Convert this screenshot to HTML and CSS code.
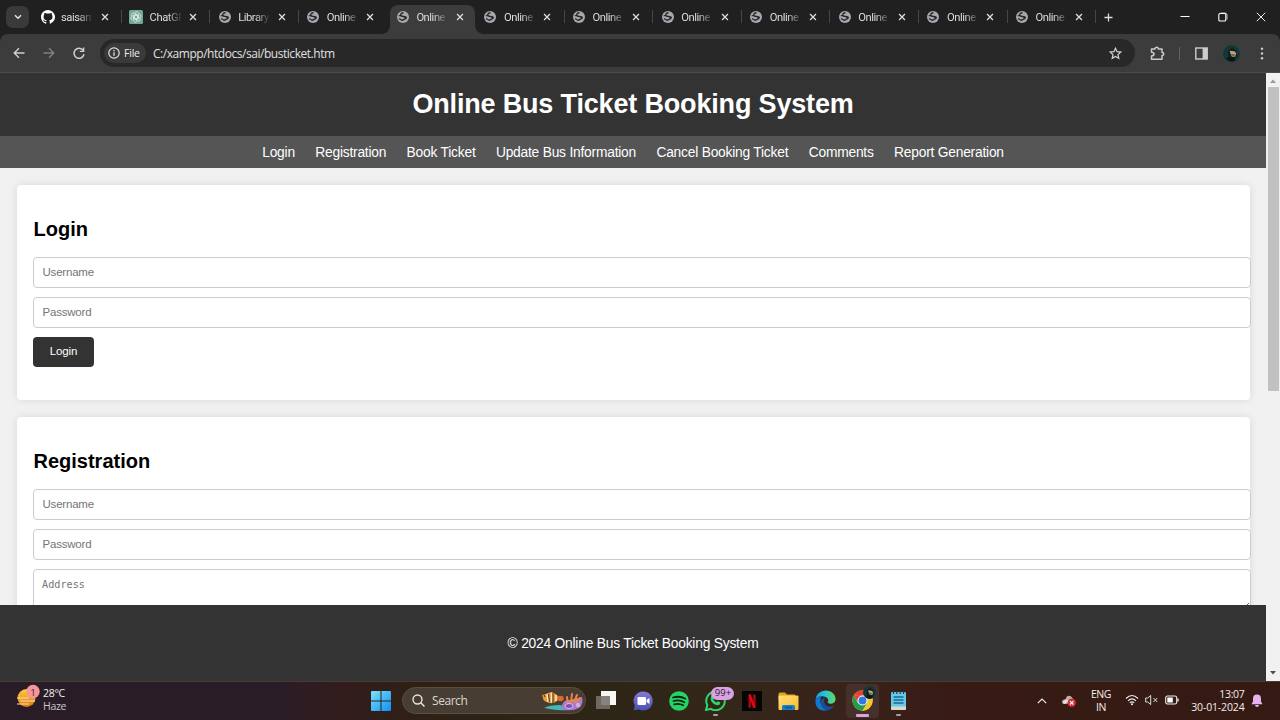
FILE: index.html
```html
<!DOCTYPE html>
<html lang="en">
<head>
<meta charset="utf-8">
<title>Online Bus Ticket Booking System</title>
<link rel="stylesheet" href="styles.css">
</head>
<body>
<svg class="defs" aria-hidden="true">
  <defs>
    <symbol id="globe" viewBox="0 0 24 24"><circle cx="12" cy="12" r="12" fill="#a5a9ae"/><path d="M13 3.500Q7 4 7.500 8q1 3 5.500 3 5 0 5 2.500t-4 3q-3 3-5 1.500l-5-3" fill="none" stroke="#24282b" stroke-width="2.600"/><path d="M2 10l5-3 2 4zM15 11l5 1-1 3-4-1z" fill="#24282b"/></symbol>
    <symbol id="x" viewBox="0 0 10 10"><path d="M1.3 1.3l7.4 7.4M8.7 1.3L1.3 8.7" stroke="#dedede" stroke-width="1.6" fill="none"/></symbol>
    <linearGradient id="win" x2="1" y2="1"><stop stop-color="#7fe0fb"/><stop offset="1" stop-color="#0a92f2"/></linearGradient>
    <linearGradient id="sun" x2="0" y2="1"><stop stop-color="#ffce3d"/><stop offset="1" stop-color="#dc7419"/></linearGradient>
    <linearGradient id="edge" x2="1" y2="0"><stop stop-color="#1aa0e0"/><stop offset=".5" stop-color="#2bc3d5"/><stop offset="1" stop-color="#62d957"/></linearGradient>
    <linearGradient id="chat" x2="0" y2="1"><stop stop-color="#8379d6"/><stop offset="1" stop-color="#4c50b5"/></linearGradient>
    <linearGradient id="fold" x2="1" y2="1"><stop stop-color="#ffdf7c"/><stop offset="1" stop-color="#f9bb2b"/></linearGradient>
    <symbol id="avatar" viewBox="0 0 18 18"><circle cx="9" cy="9" r="9" fill="#12383a"/><path d="M5 6l5-4 4 4 1 6-4 4-5-3z" fill="#141d1d"/><path d="M7 6l5 .5 2 2-1 4-3.500 0-1.500-3z" fill="#bba17f"/><path d="M8 9.500l5 .5-2 2.500z" fill="#6d5743"/><path d="M3 14q5-3 11 2-6 4-11-2z" fill="#081717"/></symbol>
  </defs>
</svg>

<header class="tabstrip">
  <button class="tabsearch" aria-label="Search tabs"><svg width="8" height="6" viewBox="0 0 8 6"><path d="M1 1.200l3 3 3-3" stroke="#e4e4e4" stroke-width="1.500" fill="none"/></svg></button>
  <div class="tabs">
    <div class="tab"><svg class="fav big" viewBox="0 0 16 16"><path fill="#fff" d="M8 0C3.580 0 0 3.580 0 8c0 3.540 2.290 6.530 5.470 7.590.4.070.550-.170.550-.380 0-.190-.010-.820-.010-1.490-2.010.370-2.530-.490-2.690-.940-.090-.230-.480-.940-.820-1.130-.280-.150-.680-.520-.010-.530.630-.010 1.080.580 1.230.820.720 1.210 1.870.870 2.330.660.070-.520.280-.870.510-1.070-1.780-.2-3.640-.890-3.640-3.950 0-.870.310-1.590.820-2.150-.080-.2-.360-1.020.080-2.120 0 0 .670-.210 2.200.820a7.700 7.700 0 0 1 4 0c1.530-1.040 2.200-.820 2.200-.820.440 1.100.160 1.920.080 2.120.510.560.820 1.270.820 2.150 0 3.070-1.870 3.750-3.650 3.950.290.250.540.730.540 1.480 0 1.070-.010 1.930-.010 2.200 0 .210.150.460.550.380A8 8 0 0 0 8 0z"/></svg><span class="name">saisant</span><svg class="close"><use href="#x"/></svg></div>
    <div class="tab"><svg class="fav big" viewBox="0 0 14 14"><rect width="14" height="14" rx="1.500" fill="#72a895"/><g fill="none" stroke="#e8f5ef" stroke-width=".8"><path id="petal" d="M6 2.500c2-1.500 4 .2 3.500 2v3L7 9"/><use href="#petal" transform="rotate(60 7 7)"/><use href="#petal" transform="rotate(120 7 7)"/><use href="#petal" transform="rotate(180 7 7)"/><use href="#petal" transform="rotate(240 7 7)"/><use href="#petal" transform="rotate(300 7 7)"/></g></svg><span class="name">ChatGP</span><svg class="close"><use href="#x"/></svg></div>
    <div class="tab"><svg class="fav"><use href="#globe"/></svg><span class="name">Library</span><svg class="close"><use href="#x"/></svg></div>
    <div class="tab nosep"><svg class="fav"><use href="#globe"/></svg><span class="name">Online</span><svg class="close"><use href="#x"/></svg></div>
    <div class="tab active nosep"><svg class="fav"><use href="#globe"/></svg><span class="name">Online</span><svg class="close"><use href="#x"/></svg></div>
    <div class="tab"><svg class="fav"><use href="#globe"/></svg><span class="name">Online</span><svg class="close"><use href="#x"/></svg></div>
    <div class="tab"><svg class="fav"><use href="#globe"/></svg><span class="name">Online</span><svg class="close"><use href="#x"/></svg></div>
    <div class="tab"><svg class="fav"><use href="#globe"/></svg><span class="name">Online</span><svg class="close"><use href="#x"/></svg></div>
    <div class="tab"><svg class="fav"><use href="#globe"/></svg><span class="name">Online</span><svg class="close"><use href="#x"/></svg></div>
    <div class="tab"><svg class="fav"><use href="#globe"/></svg><span class="name">Online</span><svg class="close"><use href="#x"/></svg></div>
    <div class="tab"><svg class="fav"><use href="#globe"/></svg><span class="name">Online</span><svg class="close"><use href="#x"/></svg></div>
    <div class="tab"><svg class="fav"><use href="#globe"/></svg><span class="name">Online</span><svg class="close"><use href="#x"/></svg></div>
  </div>
  <svg class="newtab" viewBox="0 0 10 10"><path d="M5 .5v9M.5 5h9" stroke="#ddd" stroke-width="1.400"/></svg>
  <div class="wincontrols">
    <svg width="10" height="10" viewBox="0 0 10 10"><path d="M.5 4.500h9" stroke="#fff"/></svg>
    <svg width="10" height="10" viewBox="0 0 10 10"><path d="M2.500 1H7q2 0 2 2v4.500" stroke="#bbb" fill="none"/><rect x=".8" y="1.500" width="7" height="7.500" rx="1.300" stroke="#fff" stroke-width="1.100" fill="none"/></svg>
    <svg width="10" height="10" viewBox="0 0 10 10"><path d="M.8.8l8.400 8.400M9.200.8L.8 9.200" stroke="#eee" stroke-width="1"/></svg>
  </div>
</header>

<div class="toolbar">
  <div class="navicons">
    <svg width="12" height="12" viewBox="0 0 12 12"><path d="M11.500 6H1.500M6 1.200L1.200 6 6 10.800" stroke="#d0d0d0" stroke-width="1.400" fill="none"/></svg>
    <svg width="12" height="12" viewBox="0 0 12 12"><path d="M.5 6h10M6 1.200L10.800 6 6 10.800" stroke="#808080" stroke-width="1.400" fill="none"/></svg>
    <svg width="12" height="12" viewBox="0 0 12 12"><path d="M10.200 3.500A5 5 0 1 0 11 7.200" stroke="#d0d0d0" stroke-width="1.500" fill="none"/><path d="M11.300.5v4.500H6.800V3.700h3.100V.5z" fill="#d0d0d0"/></svg>
  </div>
  <div class="omnibox">
    <span class="chip"><svg width="12" height="12" viewBox="0 0 12 12"><circle cx="6" cy="6" r="5.200" stroke="#e4e4e4" stroke-width="1.200" fill="none"/><path d="M6 5.200v3.600M6 2.900v1.300" stroke="#e4e4e4" stroke-width="1.300"/></svg><span>File</span></span>
    <span class="url">C:/xampp/htdocs/sai/busticket.htm</span>
    <svg class="star" width="13" height="13" viewBox="0 0 13 13"><path d="M6.500 1.200l1.550 3.450 3.750.4-2.800 2.550.8 3.700-3.300-1.900-3.300 1.900.8-3.700L1.200 5.050l3.750-.4z" stroke="#d4d4d4" stroke-width="1.200" fill="none"/></svg>
  </div>
  <div class="actions">
    <svg width="15" height="15" viewBox="0 0 15 15"><path d="M1.500 3H5q0-1.800 1.700-1.800T8.400 3H12v3.400q1.800 0 1.800 1.600T12 9.600v3.600H1.500V10Q4 10 4 8.100T1.500 6.200z" stroke="#cacaca" stroke-width="1.500" fill="none" stroke-linejoin="round"/></svg>
    <i class="divider"></i>
    <svg width="13" height="13" viewBox="0 0 13 13"><rect x=".8" y="1" width="11.400" height="11" stroke="#cecece" stroke-width="1.400" fill="none"/><path d="M7.600 1h4.600v11H7.600z" fill="#cecece"/></svg>
    <svg width="17" height="17"><use href="#avatar"/></svg>
    <svg width="4" height="13" viewBox="0 0 4 13"><g fill="#cfcfcf"><circle cx="2" cy="1.700" r="1.200"/><circle cx="2" cy="6.500" r="1.200"/><circle cx="2" cy="11.300" r="1.200"/></g></svg>
  </div>
</div>

<div class="viewport">
  <div class="page">
    <div class="masthead"><h1>Online Bus Ticket Booking System</h1></div>
    <nav class="menu"><a>Login</a><a>Registration</a><a>Book Ticket</a><a>Update Bus Information</a><a>Cancel Booking Ticket</a><a>Comments</a><a>Report Generation</a></nav>
    <main class="content">
      <section class="card">
        <h2>Login</h2>
        <input class="field" type="text" placeholder="Username">
        <input class="field" type="password" placeholder="Password">
        <button class="submit">Login</button>
      </section>
      <section class="card">
        <h2>Registration</h2>
        <input class="field" type="text" placeholder="Username">
        <input class="field" type="password" placeholder="Password">
        <textarea class="field area" placeholder="Address"></textarea>
      </section>
    </main>
    <footer class="footer">© 2024 Online Bus Ticket Booking System</footer>
  </div>
  <div class="scrollbar">
    <svg width="6" height="4" viewBox="0 0 6 4"><path d="M0 4l3-3.500L6 4z" fill="#9a9a9a"/></svg>
    <div class="thumb"></div>
    <svg class="down" width="6" height="4" viewBox="0 0 6 4"><path d="M0 0h6L3 3.500z" fill="#4d4d4d"/></svg>
  </div>
</div>

<div class="taskbar">
  <div class="weather">
    <svg width="26" height="26" viewBox="0 0 26 26"><circle cx="10.500" cy="14" r="9" fill="url(#sun)"/><path d="M1 14h12M4 17h15M1 20h12" stroke="#ffe0a0" stroke-width="1.200"/><circle cx="17" cy="7.500" r="6.700" fill="#f7959d"/></svg>
    <span class="alert">1</span>
    <div class="wtext"><span>28°C</span><span class="dim">Haze</span></div>
  </div>
  <div class="apps">
    <svg class="start" width="20" height="20" viewBox="0 0 20 20"><path d="M0 1q0-1 1-1h8.500v9.500H0zM10.500 0H19q1 0 1 1v8.500h-9.500zM0 10.500h9.500V20H1q-1 0-1-1zM10.500 10.500H20V19q0 1-1 1h-8.500z" fill="url(#win)"/></svg>
    <div class="search">
      <svg width="13" height="13" viewBox="0 0 13 13"><circle cx="5.500" cy="5.500" r="4.500" stroke="#e8e4de" stroke-width="1.400" fill="none"/><path d="M8.800 8.800l3.700 3.700" stroke="#e8e4de" stroke-width="1.500"/></svg>
      <span>Search</span>
      <svg class="reef" width="42" height="21" viewBox="0 0 42 21"><path d="M3 18q5-3 16-3l16 4q-12 3-32-1z" fill="#42b9b5"/><path d="M2 8L1 5l4-1q6-4 11 1l2 3-2 3q-5 4-10 1-4-1-4-4z" fill="#ec982d"/><path d="M6 4l1 8M10.500 2.500v10M15 5v6" stroke="#f4e6ca" stroke-width="1.600"/><path d="M7.500 4l1 8M12 3v10M3 5l1 2" stroke="#3b2919" stroke-width=".9"/><ellipse cx="19.500" cy="8.500" rx="3.200" ry="2.800" fill="#d96f25"/><path d="M21 19q-1-7 5-9l8 0 7-3q2 7-3 11-8 4-17 1z" fill="#a979cc"/><path d="M27 13l-1-6M30 12l1-8M33 12l3-7M35 12l4-4M27 12l9-3" stroke="#e78552" stroke-width="2" stroke-linecap="round"/><ellipse cx="28" cy="16" rx="4" ry="2.500" fill="#8054ad" stroke="#ddb5ed"/><circle cx="37" cy="15" r="2.200" fill="#d6a9e7"/></svg>
    </div>
    <div class="app"><svg width="22" height="20" viewBox="0 0 22 20"><path d="M6 0h15v14H6z" fill="#f7f7f5"/><path d="M1 5h14v13H1z" fill="#77736b" opacity=".88"/></svg></div>
    <div class="app"><svg width="20" height="20" viewBox="0 0 20 20"><path d="M10 .5a9.500 9.500 0 1 1-4 18L.8 19.300l1-4.600A9.500 9.500 0 0 1 10 .5z" fill="url(#chat)"/><rect x="4.500" y="6" width="8.500" height="8" rx="1.200" fill="#fff"/><path d="M13.500 9l3-2v6l-3-2z" fill="#fff"/></svg></div>
    <div class="app"><svg width="20" height="20" viewBox="0 0 20 20"><circle cx="10" cy="10" r="9.800" fill="#22d663"/><path d="M4 6.500q7-2 12.300 1.200M4.500 10q6-1.800 10.800 1.200M5.200 13.300q5-1.300 9 1" stroke="#152018" stroke-width="1.800" stroke-linecap="round" fill="none"/></svg></div>
    <div class="app"><svg width="21" height="21" viewBox="0 0 20 20"><path d="M1 19l1.200-4.600A8.800 8.800 0 1 1 5.600 18z" fill="none" stroke="#2cd66c" stroke-width="1.900"/><path d="M6 5.500l1.500-.5 1.200 2.800-.8 1.300q1.100 2 3 2.800l1.200-1.100 2.600 1.200q-.2 2.700-2.800 2.500Q6 13.200 5.300 8.500z" fill="#2cd66c"/></svg><span class="count">99+</span><i class="run"></i></div>
    <div class="app"><svg width="20" height="20" viewBox="0 0 20 20"><path d="M0 0h20v20H0z" fill="#050505"/><path d="M6.500 3.500h2.400v13l-2.400.5zM11.200 3.500h2.400V17l-2.400-.5z" fill="#b20710"/><path d="M6.500 3.500h2.400L13.600 17l-2.600-.5z" fill="#e50914"/></svg></div>
    <div class="app"><svg width="21" height="20" viewBox="0 0 21 20"><path d="M.5 3q0-1.500 1.500-1.500h5L9 3.500h8v5H.5z" fill="#e2a21b"/><rect x=".5" y="4.500" width="20" height="14.500" rx="1.200" fill="url(#fold)"/><path d="M4 19v-3.500q0-1.500 1.500-1.500h10q1.500 0 1.500 1.500V19z" fill="#157dc5"/><path d="M7 16.500h7" stroke="#0b5493" stroke-width="1.500"/></svg></div>
    <div class="app"><svg width="21" height="21" viewBox="0 0 20 20"><path d="M.5 9A9.600 9.600 0 0 1 10 .4c6 0 9.700 4 9.600 8.200 0 3-2.300 4.500-4.800 4.500-2 0-3.300-.8-2.600-1.800C14 8.500 10 5.600 6.300 6 3 6.400 1 7.500.5 9z" fill="url(#edge)"/><path d="M.4 9.500Q1.500 6 6 5.900q-1 2-.8 5Q5.600 17 12 19.300 3 21 .6 13.500z" fill="#1377ce"/><path d="M9.800 7Q5 8.700 5.400 12.500q1 6 6.600 6.800 4-.8 6.200-4.300-5.200 2-8.200-.8Q7.300 11 9.800 7z" fill="#164f9e"/></svg></div>
    <div class="app lit"><svg width="21" height="21" viewBox="0 0 20 20"><circle cx="10" cy="10" r="9.700" fill="#f6c72d"/><path d="M1.600 5.200A9.700 9.700 0 0 1 18.400 5.200H10z" fill="#df4335"/><path d="M1.600 5.200L5.800 12.400 10 14.700 9.300 19.700A9.700 9.700 0 0 1 1.600 5.200z" fill="#249c50"/><path d="M1.600 5.200L6 12l4-7z" fill="#df4335"/><path d="M10 19.700l4.300-7.200L5.700 12.300 10 19.700z" fill="#249c50"/><path d="M10 19.700l4.300-7.200V5.200h4.100A9.700 9.700 0 0 1 10 19.700z" fill="#f6c72d"/><circle cx="10" cy="10" r="4.800" fill="#fff"/><circle cx="10" cy="10" r="3.800" fill="#3278e2"/></svg><svg class="profile" width="13" height="13"><use href="#avatar"/></svg><i class="run wide"></i></div>
    <div class="app"><svg width="17" height="21" viewBox="0 0 17 21"><rect x="1" y="2" width="15" height="18" rx="1.200" fill="#66c9e8"/><path d="M1 16.500h15V19q0 1-1 1H2q-1 0-1-1z" fill="#ddd6cb"/><path d="M3.500 7h10M3.500 10h10M3.500 13h10" stroke="#176a97" stroke-width="1.300"/><path d="M3.500 1v3M6.800 1v3M10.200 1v3M13.500 1v3" stroke="#203f4d" stroke-width="1.200"/></svg><i class="run"></i></div>
  </div>
  <div class="tray">
    <svg class="up" width="10" height="6" viewBox="0 0 10 6"><path d="M.8 5.200L5 1l4.200 4.200" stroke="#eee" stroke-width="1.200" fill="none"/></svg>
    <svg class="cloud" width="16" height="14" viewBox="0 0 16 14"><path d="M3 10Q0 9 1.500 6.500 3 5 4.500 5.200 6 1 9 2q2 .5 3 3 2 1 1.500 4z" fill="#b9b3ad"/><path d="M4 6q3-1 5 2l-6 2Q1 8 4 6z" fill="#e3dfda"/><circle cx="10.700" cy="8.800" r="4.200" fill="#d92c38"/><path d="M9 7.100l3.400 3.400M12.400 7.100L9 10.500" stroke="#fff" stroke-width="1.100"/></svg>
    <div class="lang"><span>ENG</span><span>IN</span></div>
    <svg class="wifi" width="14" height="12" viewBox="0 0 14 12"><path d="M1 4.500q6-6 12 0M3 6.800q4-4 8 0M4.800 8.900q2.200-2.200 4.400 0" stroke="#eee" stroke-width="1.100" fill="none"/><circle cx="7" cy="10.300" r="1" fill="#eee"/></svg>
    <svg class="mute" width="13" height="12" viewBox="0 0 13 12"><path d="M.7 4v4h2l3 2.600V1.400L2.700 4zM8.500 4l3.800 4M12.300 4L8.500 8" stroke="#ddd" fill="none"/></svg>
    <svg class="battery" width="14" height="10" viewBox="0 0 14 10"><rect x=".7" y="1" width="11" height="8" rx="1.800" stroke="#eee" stroke-width="1.100" fill="none"/><path d="M2.300 2.600h5.500v4.800H2.300zM12.400 3.500h1.200v3h-1.200z" fill="#fff"/></svg>
    <div class="clock"><span>13:07</span><span>30-01-2024</span></div>
    <svg class="bell" width="12" height="14" viewBox="0 0 12 14"><path d="M6 .5q4 0 4 4.200V7.500l1.500 2.700H.5L2 7.500V4.700Q2 .5 6 .5zM4 11h4q-.3 2-2 2t-2-2z" fill="#e6b3ec"/></svg>
  </div>
</div>
</body>
</html>
```

FILE: styles.css
```css
* { box-sizing: border-box; }
body {
  margin: 0;
  width: 1280px;
  height: 720px;
  overflow: hidden;
  display: flex;
  flex-direction: column;
  background: #202020;
  color: #e2e2e2;
  font-family: "Open Sans", "Noto Sans", sans-serif;
}
svg { display: block; flex: none; }
.defs { position: absolute; width: 0; height: 0; }

/* tab strip */
.tabstrip { flex: none; height: 34px; display: flex; align-items: center; background: #202020; padding-left: 6px; }
.tabsearch { width: 23px; height: 22px; border: 0; border-radius: 7px; background: #3a3a3a; display: flex; align-items: center; justify-content: center; padding: 0; }
.tabs { display: flex; width: 1063.2px; margin-left: 3px; height: 34px; }
.tab { position: relative; flex: 0 0 88.600px; display: flex; align-items: center; padding-left: 9.500px; }
.tab::after { content: ""; position: absolute; right: -1px; top: 10px; width: 1px; height: 13px; background: #474747; }
.tab.nosep::after { display: none; }
.fav { width: 12px; height: 12px; }
.fav.big { width: 14px; height: 14px; margin: 0 -1px; }
.name { width: 31px; margin-left: 7.500px; white-space: nowrap; font-family: Roboto, "Open Sans", sans-serif; font-size: 11.200px; line-height: 17px; color: #dcdcdc; letter-spacing: -0.45px; -webkit-mask-image: linear-gradient(90deg, #000 55%, transparent 105%); mask-image: linear-gradient(90deg, #000 55%, transparent 105%); }
.close { width: 8px; height: 8px; margin-left: 8.500px; }
.active { z-index: 1; padding-left: 10.500px; }
.active::before, .active.nosep::after { content: ""; position: absolute; display: block; z-index: -1; }
.active::before { left: 3.500px; top: 5px; width: 85px; height: 29px; border-radius: 8px 8px 0 0; background: #3c3c3c; }
.active.nosep::after { left: -4.500px; right: auto; top: 26px; width: 101px; height: 8px; background: radial-gradient(circle at 0 0, transparent 7.500px, #3c3c3c 8px) left / 8px 8px no-repeat, radial-gradient(circle at 100% 0, transparent 7.500px, #3c3c3c 8px) right / 8px 8px no-repeat; }
.newtab { width: 9px; height: 9px; margin-left: 9px; }
.wincontrols { display: flex; gap: 28px; margin-left: auto; padding-right: 14px; }

/* toolbar */
.toolbar { flex: none; height: 39px; display: flex; align-items: center; background: #3c3c3c; border-bottom: 1px solid #4b4b4b; border-radius: 8px 8px 0 0; }
.navicons { width: 100px; padding-left: 13px; display: flex; gap: 18px; }
.omnibox { width: 1035px; height: 28px; border-radius: 14px; background: #282828; display: flex; align-items: center; padding: 0 13px 0 4px; }
.chip { display: flex; align-items: center; gap: 4px; width: 42px; height: 20px; padding-left: 4px; border-radius: 10px; background: #3a3a3a; font-size: 10.5px; font-weight: 500; letter-spacing: -0.2px; color: #eee; }
.url { margin-left: 7px; font-size: 12px; letter-spacing: -0.46px; color: #e0e0e0; }
.star { margin-left: auto; }
.actions { display: flex; align-items: center; padding-left: 15px; }
.divider { width: 1px; height: 13px; background: #626262; margin: 0 15px 0 14px; }
.actions svg + svg { margin-left: 15px; }
.actions svg:last-child { margin-left: 20px; }

/* web page */
.viewport { flex: none; height: 608px; display: flex; }
.page { width: 1266px; display: flex; flex-direction: column; background: #f1f1f1; color: #000; font-family: "Liberation Sans", Arial, sans-serif; font-size: 13.800px; letter-spacing: -0.22px; }
.masthead { flex: none; height: 63px; display: flex; align-items: center; justify-content: center; background: #333; color: #fff; }
h1 { margin: 0 0 1px; font-size: 27px; line-height: 30px; letter-spacing: -0.17px; }
.menu { flex: none; height: 32px; display: flex; align-items: center; justify-content: center; gap: 20.400px; background: #555; color: #fff; }
.content { flex: 1; min-height: 0; overflow: hidden; padding: 17px 16px 0 17px; display: flex; flex-direction: column; gap: 17px; }
.card { flex: none; height: 215px; padding: 16px; background: #fff; border-radius: 4px; box-shadow: 0 0 8px rgba(0, 0, 0, .1); }
h2 { margin: 17px 0 16px .5px; font-size: 20px; line-height: 23px; letter-spacing: 0; }
.field { display: block; width: 1218px; height: 31px; margin: 0 0 9px; padding: 0 8.500px 1px; border: 1px solid #ccc; border-radius: 4px; background: #fff; font-family: "Liberation Sans", Arial, sans-serif; font-size: 11.500px; line-height: 14px; letter-spacing: -0.2px; }
.field::placeholder { color: #757575; }
.area { height: 43px; padding: 8px 8px; font-family: "DejaVu Sans Mono", monospace; font-size: 10.200px; letter-spacing: 0; }
.submit { display: block; width: 61px; height: 30px; padding: 0 0 2px; border: 0; border-radius: 4px; background: #333; color: #fff; font-family: "Liberation Sans", Arial, sans-serif; font-size: 11.500px; letter-spacing: -0.15px; }
.footer { flex: none; height: 76px; display: flex; align-items: center; justify-content: center; background: #333; color: #fff; }
.scrollbar { width: 14px; background: #f1f1f1; display: flex; flex-direction: column; align-items: center; padding: 6px 0; }
.thumb { width: 11px; height: 304px; margin-top: 4px; background: #c1c1c1; }
.down { margin-top: auto; }

/* taskbar */
.taskbar { flex: none; height: 39px; display: flex; border-top: 1px solid #493c36; background: linear-gradient(90deg, #291c27 0, #291c27 270px, #321c1d 340px, #2f2016 410px, #2d2515 600px, #33271a 720px, #39221a 860px, #371a14 960px, #351a14 1280px); color: #f2eeea; font-size: 10.500px; line-height: 13px; }
.weather { position: relative; width: 371px; display: flex; padding: 2px 0 0 16px; }
.alert { position: absolute; left: 30.500px; top: 4px; font-size: 9px; color: #3b2226; }
.wtext { display: flex; flex-direction: column; padding-top: 3px; margin-left: 1px; letter-spacing: -0.3px; }
.dim { color: #cec6c8; }
.apps { display: flex; align-items: center; width: 546px; height: 37px; }
.search { width: 184px; height: 27px; margin: 0 2px 0 11px; padding: 0 2px 0 9px; display: flex; align-items: center; border-radius: 14px; border: 1px solid #5b4e3e; background: #473d32; font-size: 12px; letter-spacing: -0.45px; }
.search span { margin-left: 7px; color: #ddd7d0; }
.reef { margin-left: auto; }
.app { position: relative; width: 36.600px; height: 38px; display: flex; flex: none; align-items: center; justify-content: center; }
.lit::before { content: ""; position: absolute; z-index: -1; left: 2px; top: 2px; width: 33px; height: 34px; border-radius: 4px; background: #45302a; }
.lit { z-index: 0; }
.run { position: absolute; bottom: 4px; left: 16px; width: 5px; height: 2px; border-radius: 1px; background: #aaa19b; }
.run.wide { left: 12px; width: 13px; height: 3px; bottom: 3px; background: #d7a2dd; }
.count { position: absolute; left: 14px; top: 5px; width: 23px; height: 13px; border-radius: 7px; background: #d9a2e2; color: #291b2b; font-size: 9.500px; line-height: 12px; text-align: center; }
.profile { position: absolute; left: 19px; top: 4px; }
.tray { flex: 1; display: flex; align-items: center; padding-left: 120px; }
.up { margin-top: -1px; }
.cloud { margin-left: 14px; }
.lang { width: 24px; margin-left: 12px; display: flex; flex-direction: column; align-items: center; letter-spacing: -0.4px; padding-bottom: 1px; }
.wifi { margin-left: 12px; margin-top: -2px; }
.mute { margin-left: 6px; margin-top: -2px; }
.battery { margin-left: 7px; margin-top: -2px; }
.clock { width: 65.500px; display: flex; flex-direction: column; align-items: flex-end; letter-spacing: -0.3px; padding-bottom: 1px; }
.clock span:last-child { letter-spacing: -0.15px; }
.bell { margin-left: 6.500px; margin-top: -1px; }
```
